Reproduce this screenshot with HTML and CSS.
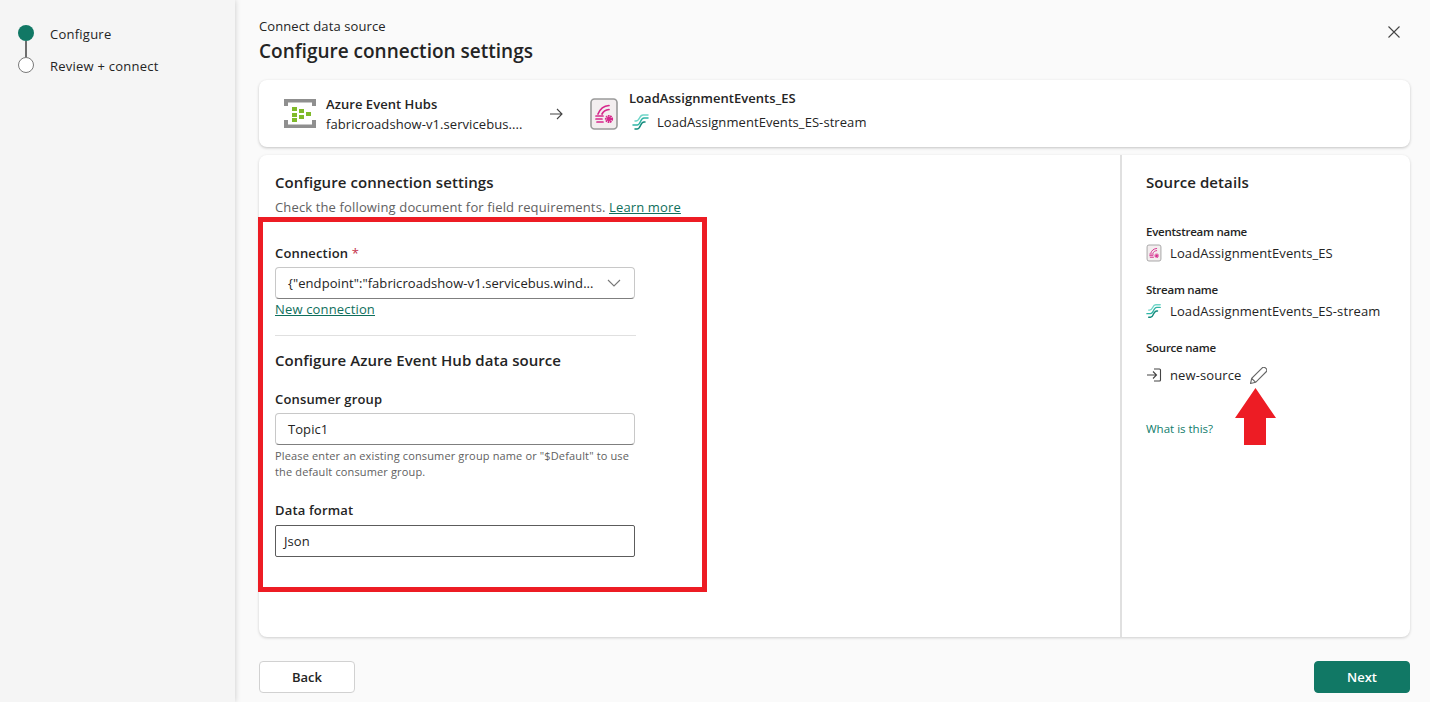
FILE: index.html
```html
<!DOCTYPE html>
<html lang="en">
<head>
    <meta charset="UTF-8">
    <meta name="viewport" content="width=device-width, initial-scale=1.0">
    <title>Connect data source</title>
    <link rel="stylesheet" href="styles.css">
</head>
<body>
    <svg class="defs" width="0" height="0" aria-hidden="true">
        <symbol id="es" viewBox="0 0 30 32">
            <rect x="2" y="1" width="26" height="30" rx="3.5" fill="#f3eeef" stroke="#9a9a9a" stroke-width="1.600"/>
            <g fill="none" stroke="#d6288c" stroke-width="1.700" stroke-linecap="round">
                <path d="M9 16c2-5 5-8 11-8.500"/>
                <path d="M13 16c1-2 3-4 7-4.500"/>
                <path d="M7 18h7M7 21h6M8 24h6"/>
            </g>
            <circle cx="20" cy="21" r="3.100" fill="none" stroke="#d6288c" stroke-width="2" stroke-dasharray="1.600 .6"/>
            <circle cx="20" cy="21" r="2.300" fill="#d6288c"/>
        </symbol>
        <symbol id="stream" viewBox="0 0 18 18">
            <g fill="none" stroke-width="1.500" stroke-linecap="round">
                <path stroke="#6fd6c8" d="M3 8h1c4 0 3-6 7-6h5"/>
                <path stroke="#2fb5a5" d="M1 12h4c4 0 3-7 7-7h4"/>
                <path stroke="#128a7c" d="M3 16h2c4 0 3-7 7-7h1"/>
            </g>
        </symbol>
    </svg>

    <div class="page">
        <aside class="sidebar">
            <div class="step">
                <span class="dot dot-on"></span>
                <span>Configure</span>
            </div>
            <div class="step-line"></div>
            <div class="step step-two">
                <span class="dot"></span>
                <span>Review + connect</span>
            </div>
        </aside>

        <main class="main">
            <header class="head">
                <div>
                    <div class="head-sub">Connect data source</div>
                    <h1>Configure connection settings</h1>
                </div>
                <svg class="close" width="14" height="14" viewBox="0 0 14 14"><path d="M1.500 1.500l11 11M12.500 1.500l-11 11" stroke="#444" stroke-width="1.100" fill="none"/></svg>
            </header>

            <section class="flow-card">
                <svg class="hub-icon" width="34" height="30" viewBox="0 0 34 30">
                    <path d="M1 7V0h32v7h-4V3.500H5V7zM1 21v8h32v-8h-4v4.500H5V21z" fill="#8f8f8f"/>
                    <g fill="#7fba2a">
                        <rect x="9" y="8" width="5" height="4"/>
                        <rect x="9" y="14" width="5" height="4"/>
                        <rect x="9" y="19" width="5" height="4"/>
                        <rect x="16" y="10" width="5" height="4"/>
                        <rect x="16" y="16" width="5" height="4"/>
                        <rect x="23" y="13" width="5" height="4"/>
                    </g>
                </svg>
                <div class="flow-src">
                    <div class="flow-name">Azure Event Hubs</div>
                    <div class="flow-text">fabricroadshow-v1.servicebus....</div>
                </div>
                <svg class="flow-arrow" width="14" height="14" viewBox="0 0 14 14"><path d="M1 7h12M8 2l5 5-5 5" stroke="#444" stroke-width="1.100" fill="none"/></svg>
                <svg class="es-icon" width="30" height="32"><use href="#es"/></svg>
                <div class="flow-dest">
                    <div class="flow-name">LoadAssignmentEvents_ES</div>
                    <div class="flow-stream">
                        <svg width="18" height="18"><use href="#stream"/></svg>
                        <span class="flow-text">LoadAssignmentEvents_ES-stream</span>
                    </div>
                </div>
            </section>

            <section class="body-card">
                <div class="form-panel">
                    <h2>Configure connection settings</h2>
                    <p class="intro">Check the following document for field requirements. <a class="link" href="#">Learn more</a></p>
                    <div class="highlight">
                        <label class="label label-first">Connection <span class="req">*</span></label>
                        <div class="field">
                            <span class="field-text">{"endpoint":"fabricroadshow-v1.servicebus.wind...</span>
                            <svg width="14" height="8" viewBox="0 0 14 8"><path d="M1 1l6 6 6-6" stroke="#777" stroke-width="1.100" fill="none"/></svg>
                        </div>
                        <a class="link new-conn" href="#">New connection</a>
                        <hr class="rule">
                        <h3>Configure Azure Event Hub data source</h3>
                        <label class="label label-group">Consumer group</label>
                        <div class="field">
                            <span class="field-text">Topic1</span>
                        </div>
                        <p class="hint">Please enter an existing consumer group name or "$Default" to use the default consumer group.</p>
                        <label class="label label-format">Data format</label>
                        <div class="field field-dark">
                            <span class="field-text">Json</span>
                        </div>
                    </div>
                </div>

                <aside class="details">
                    <h2>Source details</h2>
                    <div class="detail-label detail-first">Eventstream name</div>
                    <div class="detail-row">
                        <svg width="16" height="18"><use href="#es"/></svg>
                        <span>LoadAssignmentEvents_ES</span>
                    </div>
                    <div class="detail-label">Stream name</div>
                    <div class="detail-row">
                        <svg width="16" height="18"><use href="#stream"/></svg>
                        <span>LoadAssignmentEvents_ES-stream</span>
                    </div>
                    <div class="detail-label">Source name</div>
                    <div class="detail-row detail-source">
                        <svg width="16" height="14" viewBox="0 0 16 14"><path d="M1 7h9M7 3.500L10.500 7 7 10.500M8 1h5.500a1 1 0 0 1 1 1v10a1 1 0 0 1-1 1H8" stroke="#444" stroke-width="1.100" fill="none"/></svg>
                        <span>new-source</span>
                        <svg class="pencil" width="17" height="17" viewBox="1 1 15 15"><path d="M1.500 15.500l1-4.500L11.800 1.700a1.900 1.900 0 0 1 2.700 0l.8.8a1.900 1.900 0 0 1 0 2.700L6 14.500zM2.500 11L6 14.500" stroke="#666" stroke-width="1" fill="none"/></svg>
                    </div>
                    <a class="what" href="#">What is this?</a>
                </aside>
            </section>

            <footer class="foot">
                <button class="btn">Back</button>
                <button class="btn btn-next">Next</button>
            </footer>

            <svg class="red-arrow" width="41" height="57" viewBox="0 0 41 57"><path d="M20.500 0L41 30H31V57H9V30H0z" fill="#ed1c24"/></svg>
        </main>
    </div>
</body>
</html>
```

FILE: styles.css
```css
* {
    margin: 0;
    padding: 0;
    box-sizing: border-box;
}
html, body {
    height: 100%;
    overflow: hidden;
}
body {
    font-family: "Open Sans", "Noto Sans", sans-serif;
    font-size: 13px;
    color: #242424;
    background: #fafafa;
}
.defs {
    position: absolute;
}
.page {
    display: flex;
    height: 702px;
}

/* left steps */
.sidebar {
    width: 235px;
    flex: none;
    padding: 25px 18px 0;
    background: #f5f5f5;
    box-shadow: 0 0 6px rgba(0, 0, 0, 0.2);
    position: relative;
}
.step {
    display: flex;
    align-items: center;
    gap: 16px;
    height: 16px;
    font-size: 13px;
    line-height: 18px;
    letter-spacing: 0.24px;
}
.step span:last-child {
    padding-top: 1px;
}
.dot {
    width: 16px;
    height: 16px;
    border-radius: 50%;
    border: 1px solid #7a7a7a;
    background: #fff;
}
.dot-on {
    border: none;
    background: #117865;
}
.step-line {
    width: 2px;
    height: 16px;
    margin-left: 7px;
    background: #6e6e6e;
}

/* main column */
.main {
    flex: 1;
    position: relative;
    padding: 0 20px 0 24px;
}
.head {
    display: flex;
    justify-content: space-between;
    height: 80px;
    padding-top: 17px;
}
.head-sub {
    font-size: 13px;
    line-height: 18px;
    letter-spacing: 0.1px;
}
h1 {
    font-size: 19px;
    line-height: 26px;
    margin-top: 3px;
    font-weight: 600;
}
.close {
    margin: 8px 9px 0 0;
}
.flow-card {
    display: flex;
    align-items: center;
    height: 67px;
    padding-left: 24px;
    background: #fff;
    border-radius: 8px;
    box-shadow: 0 1px 3px rgba(0, 0, 0, 0.22);
}
.hub-icon {
    margin-right: 9px;
}
.flow-src {
    width: 203px;
    margin-right: 20px;
}
.flow-name {
    font-size: 13px;
    line-height: 18px;
    font-weight: 600;
    letter-spacing: 0.05px;
}
.flow-text {
    font-size: 13px;
    line-height: 18px;
    letter-spacing: 0.07px;
}
.flow-src .flow-text {
    margin-top: 2px;
}
.flow-arrow {
    margin-right: 26px;
}
.es-icon {
    margin-right: 10px;
}
.flow-dest {
    padding-bottom: 8px;
}
.flow-stream {
    display: flex;
    align-items: center;
    gap: 7px;
    margin: 6px 0 0 3px;
}
.body-card {
    display: flex;
    height: 482px;
    margin-top: 8px;
    background: #fff;
    border-radius: 8px;
    box-shadow: 0 1px 3px rgba(0, 0, 0, 0.18);
}
h2 {
    font-size: 15px;
    line-height: 20px;
    font-weight: 600;
    letter-spacing: 0.08px;
}
.form-panel {
    flex: 1;
    padding: 17px 0 0 16px;
}
.intro {
    margin-top: 5px;
    line-height: 20px;
    color: #616161;
    letter-spacing: 0.14px;
}
.link {
    color: #0f6f5c;
    text-decoration: underline;
}

/* annotation frame, same place as the form fields */
.highlight {
    width: 449px;
    height: 375px;
    margin: 0 0 0 -17px;
    padding: 22px 0 0 12px;
    border: 5px solid #ed1c24;
}
.label {
    display: block;
    line-height: 18px;
    font-weight: 600;
    letter-spacing: 0.16px;
}
.req {
    color: #c4314b;
    font-weight: 400;
}
.field {
    display: flex;
    align-items: center;
    justify-content: space-between;
    width: 360px;
    height: 32px;
    margin-top: 5px;
    padding: 0 13px 0 12px;
    background: #fff;
    border: 1px solid #c8c8c8;
    border-bottom-color: #7f7f7f;
    border-radius: 4px;
}
.field-dark {
    margin-top: 6px;
    padding: 0 8px;
    border-color: #5c5c5c;
    border-radius: 2px;
}
.field-text {
    letter-spacing: 0.07px;
    white-space: nowrap;
}
.new-conn {
    display: block;
    margin-top: 1px;
    line-height: 18px;
    letter-spacing: 0.16px;
}
.rule {
    width: 361px;
    margin-top: 17px;
    border: none;
    border-top: 1px solid #e0e0e0;
}
h3 {
    margin-top: 14px;
    font-size: 15px;
    line-height: 20px;
    font-weight: 600;
    letter-spacing: 0.06px;
}
.label-group {
    margin-top: 20px;
}
.hint {
    width: 360px;
    margin-top: 3px;
    font-size: 11px;
    line-height: 16px;
    color: #616161;
    letter-spacing: 0.14px;
}
.label-format {
    margin-top: 21px;
}

/* source details */
.details {
    width: 290px;
    flex: none;
    padding: 17px 0 0 24px;
    border-left: 2px solid #e0e0e0;
}
.detail-label {
    margin-top: 19px;
    font-size: 11.500px;
    line-height: 16px;
    font-weight: 600;
    letter-spacing: -0.25px;
}
.detail-first {
    margin-top: 32px;
}
.detail-row {
    display: flex;
    align-items: center;
    gap: 8px;
    height: 20px;
    margin-top: 3px;
    letter-spacing: 0.1px;
}
.detail-source {
    height: 22px;
    margin-top: 8px;
}
.pencil {
    margin-left: 1px;
}
.what {
    display: block;
    margin-top: 35px;
    font-size: 11.500px;
    line-height: 16px;
    color: #0f7c6b;
    text-decoration: none;
}

/* buttons */
.foot {
    display: flex;
    justify-content: space-between;
    margin-top: 24px;
}
.btn {
    width: 96px;
    height: 32px;
    font-family: inherit;
    font-size: 13px;
    font-weight: 600;
    color: #242424;
    background: #fff;
    border: 1px solid #d1d1d1;
    border-radius: 4px;
}
.btn-next {
    color: #fff;
    background: #117865;
    border-color: #117865;
}
.red-arrow {
    position: absolute;
    left: 1000px;
    top: 388px;
}
```
